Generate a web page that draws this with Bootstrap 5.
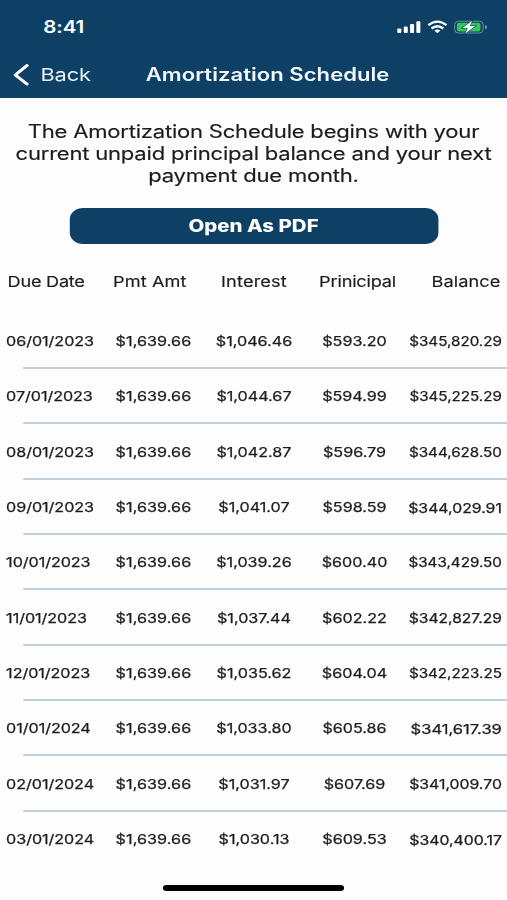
<!DOCTYPE html>
<html lang="en">
<head>
<meta charset="utf-8">
<meta name="viewport" content="width=device-width, initial-scale=1">
<title>Amortization Schedule</title>
<link href="https://cdn.jsdelivr.net/npm/bootstrap@5.3.0/dist/css/bootstrap.min.css" rel="stylesheet">
<style>
  html, body { width: 100%; height: 900px; overflow: hidden; }
  body { background: #fdfdfe; font-family: Inter, "Liberation Sans", sans-serif; color: #1c1c1e; }
  .phone { width: 414px; height: 900px; transform: scaleX(1.22464); transform-origin: 0 0; }
  .topbar { height: 98px; background: #0d4064; color: #fff; }
  .status { height: 52px; padding: 2px 15.5px 0 35.3px; }
  .clock { font-size: 16.8px; font-weight: 600; letter-spacing: -.1px; padding-top: 1px; }
  .titlebar { height: 45px; padding-left: 10px; }
  .back { width: 109px; font-size: 17.8px; letter-spacing: -.1px; color: #e9f2fa; }
  .back svg { margin-right: 9px; }
  .back span { padding-top: 1px; }
  .title { font-size: 18px; font-weight: 600; color: #f1f7fc; letter-spacing: .03px; }
  .intro { padding-top: 22.6px; font-size: 18px; line-height: 22.3px; letter-spacing: -.18px; height: 110px; -webkit-text-stroke: .15px; }
  .pdf { width: 301px; height: 35.5px; border-radius: 11px; background: #0d4064; font-size: 16.7px; font-weight: 800; line-height: 36px; }
  .pdf:hover { background: #0a3453; }
  .grid { display: grid; grid-template-columns: 84px 82.6px 81.6px 82.6px 1fr; align-items: center; text-align: center; white-space: nowrap; }
  .heads { height: 70px; padding-top: 8px; font-size: 14.8px; -webkit-text-stroke: .15px; }
  .heads > :nth-child(1) { text-align: left; padding-left: 6.2px; letter-spacing: -.2px; }
  .heads > :nth-child(2) { padding-right: 6px; letter-spacing: .1px; }
  .heads > :nth-child(3) { letter-spacing: .15px; }
  .heads > :nth-child(4) { padding-left: 5px; letter-spacing: -.15px; }
  .heads > :nth-child(5) { text-align: right; padding-right: 5.3px; letter-spacing: .1px; }
  .line { position: relative; height: 55.37px; padding-top: 1.2px; font-size: 13.2px; -webkit-text-stroke: .25px; }
  .line:not(:last-child)::after { content: ""; position: absolute; left: 18.5px; right: 0; bottom: 0; height: 2px; background: #c3d0d9; }
  .line > :first-child { text-align: left; padding-left: 5px; letter-spacing: -.05px; }
  .line > :nth-child(2) { letter-spacing: .06px; }
  .line > :last-child { text-align: right; padding: 1px 4.2px 0 0; font-size: 12.4px; }
  .homebar { width: 147.5px; height: 6px; border-radius: 3px; background: #000; margin-top: 17.8px; }
</style>
<script src="https://cdn.jsdelivr.net/npm/bootstrap@5.3.0/dist/js/bootstrap.bundle.min.js"></script>
</head>
<body>
<div class="phone d-flex flex-column">
  <header class="topbar flex-shrink-0">
    <div class="status d-flex align-items-center justify-content-between">
      <span class="clock">8:41</span>
      <svg width="75" height="14" viewBox="0 0 92 14" preserveAspectRatio="none" aria-label="Signal, Wi-Fi, battery charging">
        <g fill="#fff">
          <rect x="0.5" y="8.5" width="4" height="4.5" rx="1"/><rect x="7" y="6.5" width="4" height="6.5" rx="1"/>
          <rect x="13.3" y="4" width="4" height="9" rx="1"/><rect x="19.6" y="1.2" width="4" height="11.8" rx="1"/>
        </g>
        <g fill="none" stroke="#fff" stroke-width="2.3">
          <path d="M31.6 5.2Q40.7-2 49.8 5.2"/><path d="M34.8 8.5Q40.7 3.9 46.6 8.5"/>
        </g>
        <path d="M37.6 10.5Q40.7 8.3 43.8 10.5L40.7 13.2Z" fill="#fff"/>
        <rect x="58" y="1.2" width="28.5" height="11.8" rx="3.6" fill="none" stroke="#6f8fa6"/>
        <path d="M88.3 5v4.2q2.4-.6 2.4-2.1T88.3 5z" fill="#6f8fa6"/>
        <rect x="60.2" y="2.8" width="23.6" height="8.6" rx="2" fill="#35c759"/>
        <path d="M75.5.8L65.8 8h5.2l-2.4 5.4L78.7 6h-5.4z" fill="#fff" stroke="#0d4064" stroke-width="1.2" paint-order="stroke"/>
      </svg>
    </div>
    <nav class="titlebar d-flex align-items-center">
      <a href="#" class="back d-flex align-items-center text-decoration-none">
        <svg width="14" height="22" viewBox="0 0 14 22" fill="none" stroke="#fff" stroke-width="2.7" stroke-linecap="round" stroke-linejoin="round"><path d="M12 1.5L2.5 11l9.5 9"/></svg>
        <span>Back</span>
      </a>
      <h1 class="title m-0">Amortization Schedule</h1>
    </nav>
  </header>
  <p class="intro m-0 text-center flex-shrink-0">The Amortization Schedule begins with your<br>current unpaid principal balance and your next<br>payment due month.</p>
  <button type="button" class="pdf btn p-0 border-0 text-white mx-auto flex-shrink-0">Open As PDF</button>
  <div class="grid heads flex-shrink-0">
    <span>Due Date</span><span>Pmt Amt</span><span>Interest</span><span>Prinicipal</span><span>Balance</span>
  </div>
  <main id="rows" class="flex-shrink-0"></main>
  <div class="homebar mx-auto flex-shrink-0"></div>
</div>
<script>
  const schedule = [
    ["06/01/2023", "$1,046.46", "$593.20", "$345,820.29"],
    ["07/01/2023", "$1,044.67", "$594.99", "$345,225.29"],
    ["08/01/2023", "$1,042.87", "$596.79", "$344,628.50"],
    ["09/01/2023", "$1,041.07", "$598.59", "$344,029.91"],
    ["10/01/2023", "$1,039.26", "$600.40", "$343,429.50"],
    ["11/01/2023", "$1,037.44", "$602.22", "$342,827.29"],
    ["12/01/2023", "$1,035.62", "$604.04", "$342,223.25"],
    ["01/01/2024", "$1,033.80", "$605.86", "$341,617.39"],
    ["02/01/2024", "$1,031.97", "$607.69", "$341,009.70"],
    ["03/01/2024", "$1,030.13", "$609.53", "$340,400.17"]
  ];
  document.getElementById("rows").innerHTML = schedule.map(([due, interest, principal, balance]) =>
    `<div class="grid line"><span>${due}</span><span>$1,639.66</span><span>${interest}</span><span>${principal}</span><span><b class="fw-normal">${balance}</b></span></div>`).join("");

  // Shrink or grow each balance so that it fills its column
  const columnWidth = 76;
  document.querySelectorAll("#rows b").forEach(el => {
    el.style.fontSize = Math.min(13.5, 12.4 * columnWidth / el.offsetWidth).toFixed(2) + "px";
  });
</script>
</body>
</html>
